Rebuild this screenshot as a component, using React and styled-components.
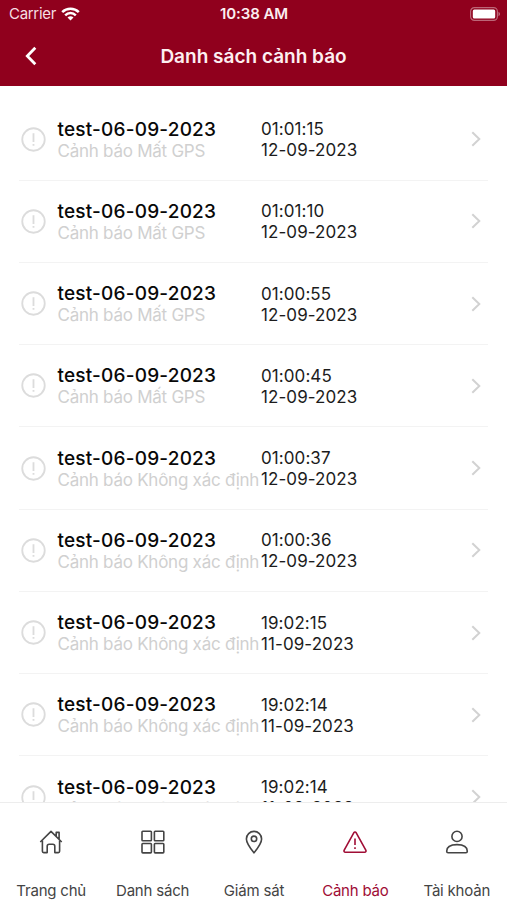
import React, { useState } from "react";
import styled, { createGlobalStyle } from "styled-components";

const alerts = [
  { type: "Mất GPS", time: "01:01:15", date: "12-09-2023" },
  { type: "Mất GPS", time: "01:01:10", date: "12-09-2023" },
  { type: "Mất GPS", time: "01:00:55", date: "12-09-2023" },
  { type: "Mất GPS", time: "01:00:45", date: "12-09-2023" },
  { type: "Không xác định", time: "01:00:37", date: "12-09-2023" },
  { type: "Không xác định", time: "01:00:36", date: "12-09-2023" },
  { type: "Không xác định", time: "19:02:15", date: "11-09-2023" },
  { type: "Không xác định", time: "19:02:14", date: "11-09-2023" },
  { type: "Không xác định", time: "19:02:14", date: "11-09-2023" },
];

const HomeIcon = () => (
  <TabSvg viewBox="0 0 24 24">
    <path d="M1.3 12L12 1.4 22.7 12M17.2 6.2V2.4h2.9v6.8" />
    <path d="M3.4 10.4v10.9c0 .8.5 1.3 1.3 1.3h3.5v-6.4c0-1.2.8-2 2-2h3.600c1.200 0 2 .8 2 2v6.400h3.500c.8 0 1.300-.5 1.300-1.300V10.400" />
  </TabSvg>
);

const GridIcon = () => (
  <TabSvg viewBox="0 0 24 24">
    <rect x="1" y="1.3" width="9.4" height="9.4" rx=".8" />
    <rect x="13.4" y="1.3" width="9.4" height="9.4" rx=".8" />
    <rect x="1" y="13.5" width="9.4" height="9.4" rx=".8" />
    <rect x="13.4" y="13.5" width="9.4" height="9.4" rx=".8" />
  </TabSvg>
);

const PinIcon = () => (
  <TabSvg viewBox="0 0 24 24">
    <path d="M12 22.8C9.4 19.6 4.4 13.6 4.4 9a7.6 7.6 0 0 1 15.2 0c0 4.6-5 10.6-7.6 13.8z" />
    <circle cx="12" cy="8.8" r="2.7" />
  </TabSvg>
);

const WarnIcon = () => (
  <TabSvg viewBox="0 0 24 24">
    <path d="M10.9 2.7L1.2 20.1c-.5 1.1 0 2.1 1.2 2.1h19.2c1.2 0 1.7-1 1.2-2.1L13.1 2.7c-.5-.9-1.7-.9-2.2 0z" />
    <path d="M12 8.4v6.6M12 17.3v1.7" />
  </TabSvg>
);

const UserIcon = () => (
  <TabSvg viewBox="0 0 24 24">
    <circle cx="12" cy="6.4" r="5.1" />
    <path d="M1.7 21.3c0-4.4 4.3-6.7 10.3-6.7s10.3 2.3 10.3 6.7c0 .9-.5 1.4-1.4 1.4H3.1c-.9 0-1.4-.5-1.4-1.4z" />
  </TabSvg>
);

const tabs = [
  { label: "Trang chủ", Icon: HomeIcon },
  { label: "Danh sách", Icon: GridIcon },
  { label: "Giám sát", Icon: PinIcon },
  { label: "Cảnh báo", Icon: WarnIcon },
  { label: "Tài khoản", Icon: UserIcon },
];

const App = () => {
  const [active, setActive] = useState("Cảnh báo");

  return (
    <Container>
      <GlobalStyle />
      <Header>
        <StatusBar>
          <Carrier>
            Carrier
            <svg width="19" height="14" viewBox="0 0 19 14" fill="none">
              <g stroke="#fff" strokeWidth="2.5">
                <path d="M1.2 5.2a11.8 11.8 0 0 1 16.6 0" />
                <path d="M4.2 8.3a7.5 7.5 0 0 1 10.6 0" />
              </g>
              <path d="M6.5 10.6a4.3 4.3 0 0 1 6 0l-3 3z" fill="#fff" />
            </svg>
          </Carrier>
          <Clock>10:38 AM</Clock>
          <Battery>
            <svg width="31" height="14" viewBox="0 0 31 14">
              <rect
                x=".6"
                y=".6"
                width="26.8"
                height="12.8"
                rx="3.8"
                fill="none"
                stroke="#fff"
                strokeOpacity=".4"
                strokeWidth="1.2"
              />
              <rect x="2.8" y="2.5" width="22.4" height="9" rx="1.5" fill="#fff" />
              <path d="M28.5 4.8c2 .8 2 3.6 0 4.4z" fill="#fff" opacity=".45" />
            </svg>
          </Battery>
        </StatusBar>
        <NavBar>
          <Back>
            <svg width="12" height="20" viewBox="0 0 12 20" fill="none">
              <path
                d="M10.3 1.8L2.3 10l8 8.2"
                stroke="#fff"
                strokeWidth="2.8"
              />
            </svg>
          </Back>
          <Title>Danh sách cảnh báo</Title>
        </NavBar>
      </Header>
      <List>
        {alerts.map((item, i) => (
          <Row key={i}>
            <AlertSvg viewBox="0 0 26 26">
              <circle cx="13" cy="13" r="11.7" />
              <path d="M13 6.500v9M13 17.800v1.800" />
            </AlertSvg>
            <Info>
              <Name>test-06-09-2023</Name>
              <Kind>Cảnh báo {item.type}</Kind>
            </Info>
            <When>
              <span>{item.time}</span>
              <span>{item.date}</span>
            </When>
            <Chevron viewBox="0 0 10 16">
              <path d="M1.3 1.2L8.3 8l-7 6.8" />
            </Chevron>
          </Row>
        ))}
      </List>
      <TabBar>
        {tabs.map(({ label, Icon }) => (
          <Tab
            key={label}
            $active={active === label}
            onClick={() => setActive(label)}
          >
            <Icon />
            <TabLabel>{label}</TabLabel>
          </Tab>
        ))}
      </TabBar>
    </Container>
  );
};

export default App;

const GlobalStyle = createGlobalStyle`
  * {
    box-sizing: border-box;
  }
  body {
    margin: 0;
    background: #fff;
    font-family: Inter, Roboto, sans-serif;
  }
`;

const Container = styled.div`
  width: 100%;
  height: 100vh;
  display: flex;
  flex-direction: column;
  overflow: hidden;
  background: #fff;
`;

const Header = styled.div`
  height: 86px;
  flex-shrink: 0;
  background: #90001d;
  color: #fff;
`;

const StatusBar = styled.div`
  height: 27px;
  display: grid;
  grid-template-columns: 1fr auto 1fr;
  align-items: center;
  padding: 0 6px 0 9px;
`;

const Carrier = styled.div`
  display: flex;
  align-items: center;
  gap: 5px;
  font-size: 15px;
  letter-spacing: -0.3px;
  color: #f6dfe3;
`;

const Clock = styled.div`
  font-size: 15px;
  font-weight: 600;
  letter-spacing: -0.1px;
  margin-right: 2px;
  color: #fbeef0;
`;

const Battery = styled.div`
  display: flex;
  justify-content: flex-end;
`;

const NavBar = styled.div`
  height: 58px;
  display: grid;
  grid-template-columns: 60px 1fr 60px;
  align-items: center;
`;

const Back = styled.div`
  display: flex;
  padding-left: 25px;
  cursor: pointer;
`;

const Title = styled.div`
  text-align: center;
  font-size: 19px;
  font-weight: 600;
  color: #fdeff1;
`;

const List = styled.div`
  flex: 1;
  min-height: 0;
  overflow: hidden;
  padding: 12.4px 19px 0;
`;

const Row = styled.div`
  height: 82.25px;
  display: grid;
  grid-template-columns: 36.5px 203.5px 1fr 10px;
  align-items: center;
  padding: 0 7px 0 2px;
  border-bottom: 1px solid #f3f3f3;
`;

const AlertSvg = styled.svg`
  width: 25px;
  height: 25px;
  fill: none;
  stroke: #dcdcdc;
  stroke-width: 1.9;
`;

const Info = styled.div`
  display: flex;
  flex-direction: column;
  white-space: nowrap;
`;

const Name = styled.div`
  font-size: 19px;
  line-height: 24px;
  font-weight: 500;
  letter-spacing: 0.2px;
  color: #080808;
`;

const Kind = styled.div`
  font-size: 17px;
  line-height: 19px;
  letter-spacing: -0.25px;
  color: #d0d0d0;
`;

const When = styled.div`
  display: flex;
  flex-direction: column;
  padding-top: 2px;
  font-size: 17px;
  line-height: 21px;
  letter-spacing: 0.08px;
  color: #1c1c1c;
`;

const Chevron = styled.svg`
  width: 10px;
  height: 16px;
  fill: none;
  stroke: #d2d2d2;
  stroke-width: 2;
`;

const TabBar = styled.div`
  height: 98px;
  flex-shrink: 0;
  display: grid;
  grid-template-columns: repeat(5, 1fr);
  border-top: 1px solid #ededed;
`;

const Tab = styled.div`
  display: flex;
  flex-direction: column;
  align-items: center;
  padding: 27px 0 0 1px;
  color: ${(props) => (props.$active ? "#a00d35" : "#444")};
  cursor: pointer;
`;

const TabSvg = styled.svg`
  width: 24px;
  height: 24px;
  fill: none;
  stroke: currentColor;
  stroke-width: 1.6;
  stroke-linejoin: round;
`;

const TabLabel = styled.span`
  margin-top: 27px;
  font-size: 15px;
  line-height: 20px;
  letter-spacing: -0.2px;
  white-space: nowrap;
`;
